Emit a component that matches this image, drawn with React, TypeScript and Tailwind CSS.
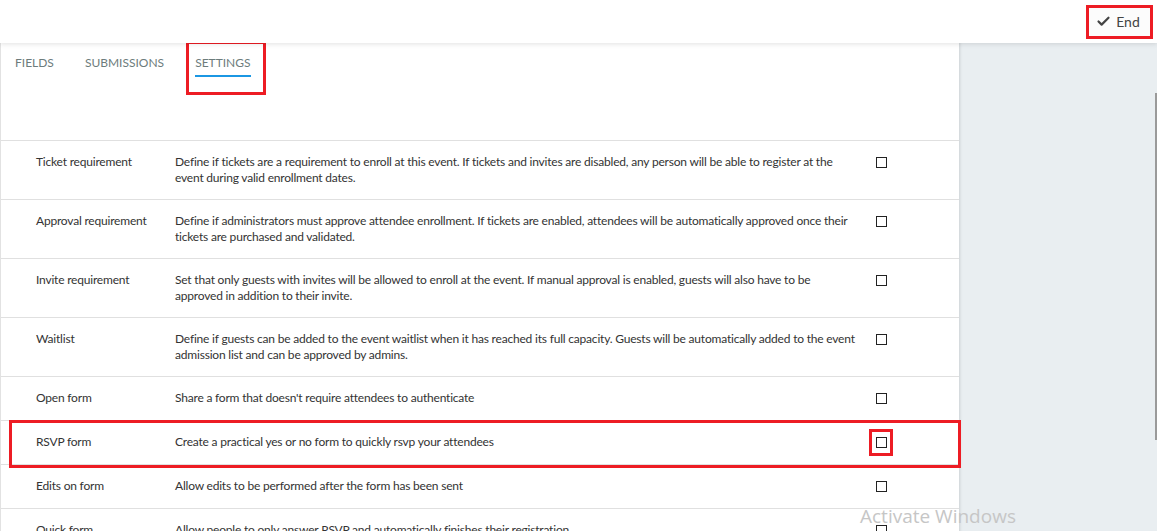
import { Check } from 'lucide-react';

const rows = [
  {
    label: 'Ticket requirement',
    text: 'Define if tickets are a requirement to enroll at this event. If tickets and invites are disabled, any person will be able to register at the event during valid enrollment dates.',
  },
  {
    label: 'Approval requirement',
    text: 'Define if administrators must approve attendee enrollment. If tickets are enabled, attendees will be automatically approved once their tickets are purchased and validated.',
  },
  {
    label: 'Invite requirement',
    text: 'Set that only guests with invites will be allowed to enroll at the event. If manual approval is enabled, guests will also have to be approved in addition to their invite.',
  },
  {
    label: 'Waitlist',
    text: 'Define if guests can be added to the event waitlist when it has reached its full capacity. Guests will be automatically added to the event admission list and can be approved by admins.',
  },
  { label: 'Open form', text: "Share a form that doesn't require attendees to authenticate" },
  { label: 'RSVP form', text: 'Create a practical yes or no form to quickly rsvp your attendees', marked: true },
  { label: 'Edits on form', text: 'Allow edits to be performed after the form has been sent' },
  { label: 'Quick form', text: 'Allow people to only answer RSVP and automatically finishes their registration' },
];

export default function App() {
  return (
    <div className="relative h-screen overflow-hidden bg-white text-[#333] font-['Lato',sans-serif]">
      <header className="relative z-10 flex h-[43px] items-center justify-end bg-white pr-[4px] shadow-[0_1px_5px_rgba(0,0,0,0.12)]">
        <button className="relative flex h-[34px] w-[67px] items-center justify-center gap-[5px] bg-[#fcfcfc] pr-[3px] text-[14px] text-[#444]">
          <Check className="h-[15px] w-[15px]" strokeWidth={3.5} />
          <span>End</span>
          <span className="absolute inset-0 border-[3px] border-[#ed1c24]" />
        </button>
      </header>

      <div className="flex h-[488px]">
        <main className="w-[959px] shrink-0 border-l border-[#e2e2e2]">
          <nav className="flex h-[97px] gap-[31px] pl-[14px] pt-[11px] text-[12px] uppercase text-[#6d7c7c]">
            <span className="h-fit">Fields</span>
            <span className="h-fit">Submissions</span>
            <span className="relative h-fit">
              Settings
              <span className="mt-[3px] block h-[2px] w-full bg-[#1b97e3]" />
              <span className="absolute -left-[9px] -right-[15px] -top-[13px] -bottom-[18px] border-[3px] border-[#ed1c24]" />
            </span>
          </nav>

          <div className="border-t border-[#e0e0e0]">
            {rows.map((row) => (
              <div
                key={row.label}
                className="relative flex min-h-[44px] border-b border-[#e0e0e0] py-[13px] pl-[35px] text-[12px] leading-[16px] tracking-[-0.2px]"
              >
                <div className="w-[139px] shrink-0">{row.label}</div>
                <div className="w-[685px] shrink-0">{row.text}</div>
                <div className="relative ml-[16px] mt-[3px] h-[11px] w-[11px] border-[1.5px] border-[#222]">
                  {row.marked && (
                    <span className="absolute -left-[8px] -right-[7px] -top-[9px] -bottom-[9px] border-[3px] border-[#ed1c24]" />
                  )}
                </div>
                {row.marked && (
                  <span className="absolute left-[8px] -right-[2px] -top-[1px] -bottom-[4px] border-[3px] border-[#ed1c24]" />
                )}
              </div>
            ))}
          </div>
        </main>

        <aside className="flex-1 bg-[#e9eef1] shadow-[inset_3px_0_3px_-2px_rgba(0,0,0,0.12)]" />
      </div>

      <div className="absolute right-0 top-[93px] h-[347px] w-[2px] bg-[#9a9a9a]" />
      <div className="pointer-events-none absolute left-[860px] top-[502px] text-[19px] text-[#c6c6c6] font-['Open_Sans',sans-serif]">
        Activate Windows
      </div>
    </div>
  );
}
